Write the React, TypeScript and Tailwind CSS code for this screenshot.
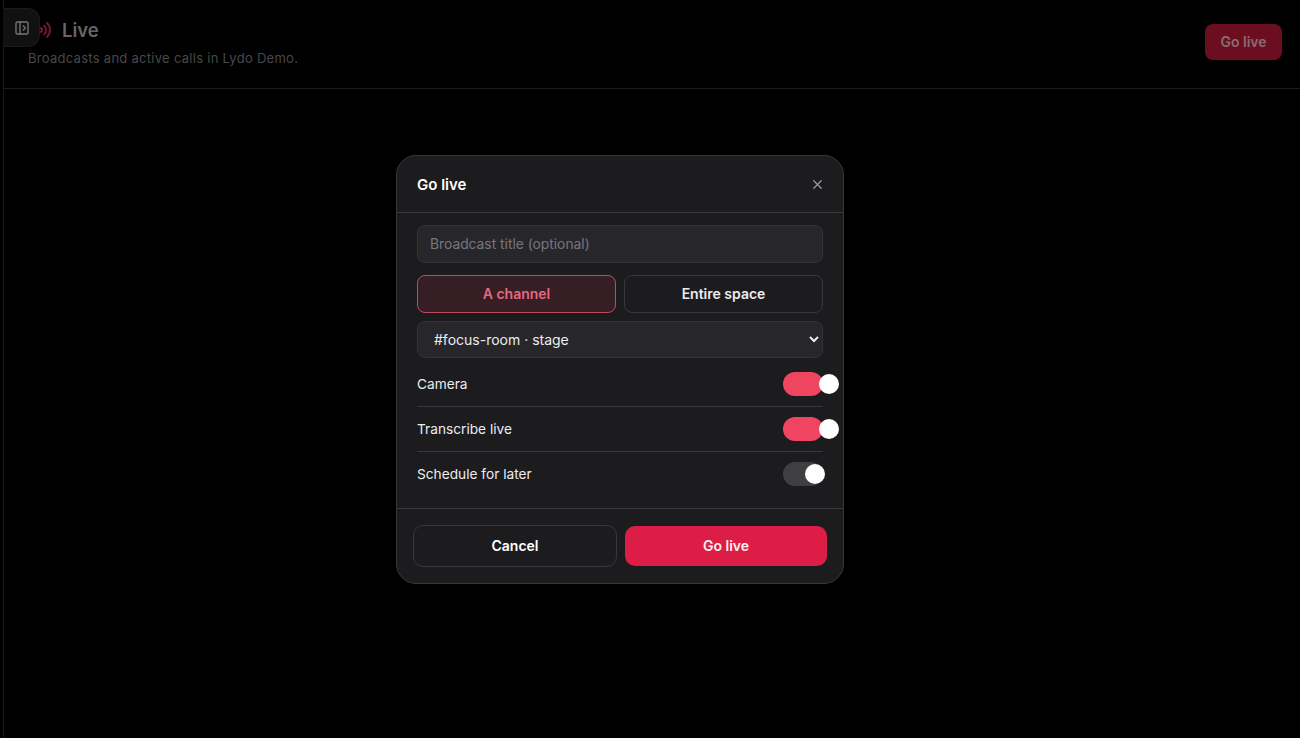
import { X, Radio, PanelLeftOpen } from "lucide-react";

function Toggle({ on }: { on: boolean }) {
  return (
    <div className={`relative h-6 w-10 shrink-0 rounded-full ${on ? "bg-[#ef4560]" : "bg-[#3f3f42]"}`}>
      <div className={`absolute top-0.5 size-5 rounded-full bg-white ${on ? "left-9" : "left-[22px]"}`} />
    </div>
  );
}

function OptionRow({ label, on, last }: { label: string; on: boolean; last?: boolean }) {
  return (
    <div className={`flex items-center justify-between ${last ? "h-11" : "h-[45px] border-b border-[#38383b]"}`}>
      <span className="text-[13.7px] text-[#ececee]">{label}</span>
      <Toggle on={on} />
    </div>
  );
}

export default function App() {
  return (
    <div className="relative flex h-screen w-full overflow-hidden bg-black font-['Inter',sans-serif]">
      <div className="w-1 shrink-0 border-r border-[#1a1a1b]" />
      <div className="min-w-0 flex-1">
        <header className="flex h-[89px] items-start justify-between border-b border-[#1c1c1d] pl-6 pr-[18px]">
          <div className="pt-[18px]">
            <div className="flex h-6 items-center gap-2.5">
              <Radio className="size-6 text-[#6e1a2d]" strokeWidth={2} />
              <h1 className="text-[18.5px] font-semibold leading-6 text-[#666668]">Live</h1>
            </div>
            <p className="mt-1.5 text-[13px] leading-5 tracking-[0.28px] text-[#48484a]">
              Broadcasts and active calls in Lydo Demo.
            </p>
          </div>
          <button className="mt-6 h-9 w-[77px] rounded-lg bg-[#6b0e20] pb-0.5 text-[14px] font-semibold text-[#8c6a72]">
            Go live
          </button>
        </header>
      </div>

      {/* sidebar toggle sits over the header */}
      <button className="absolute left-[3px] top-2 flex h-[39px] w-[37px] items-center justify-center rounded-r-xl border border-l-0 border-[#1b1b1c] bg-[#111112] pl-0.5">
        <PanelLeftOpen className="size-4 text-[#77777a]" />
      </button>

      {/* modal */}
      <div className="absolute left-[396px] top-[155px] flex h-[429px] w-[448px] flex-col rounded-[20px] border border-[#38383b] bg-[#1c1c1e]">
        <div className="flex h-[57px] shrink-0 items-center justify-between border-b border-[#38383b] pl-5 pr-[18px]">
          <h2 className="pt-0.5 text-[15px] font-semibold text-white">Go live</h2>
          <X className="size-[15px] text-[#9a9a9e]" />
        </div>

        <div className="flex flex-1 flex-col px-5 pt-3">
          <input
            placeholder="Broadcast title (optional)"
            className="h-[38px] w-full rounded-lg border border-[#323236] bg-[#27272b] px-3 pb-px text-[13.8px] text-white outline-none placeholder:text-[#77777b]"
          />
          <div className="mt-3 grid grid-cols-2 gap-2">
            <button className="h-[38px] rounded-lg border border-[#c04a62] bg-[#351e24] pb-0.5 text-[14px] font-semibold text-[#e8677f]">
              A channel
            </button>
            <button className="h-[38px] rounded-lg border border-[#38383b] bg-[#1c1c1e] pb-0.5 text-[14px] font-semibold text-[#ececee]">
              Entire space
            </button>
          </div>
          <select
            defaultValue="focus"
            className="mt-2 h-[37px] w-full rounded-lg border border-[#323236] bg-[#27272b] px-3 text-[14px] text-[#ececee] outline-none"
          >
            <option value="focus">#focus-room · stage</option>
          </select>
          <div className="mt-1">
            <OptionRow label="Camera" on />
            <OptionRow label="Transcribe live" on />
            <OptionRow label="Schedule for later" on={false} last />
          </div>
        </div>

        <div className="flex h-[75px] shrink-0 items-center gap-2 border-t border-[#38383b] px-4">
          <button className="h-[42px] w-[204px] rounded-[10px] border border-[#38383b] pb-0.5 text-[14px] font-semibold text-white">
            Cancel
          </button>
          <button className="h-10 w-[202px] rounded-[10px] bg-[#dc1e46] pb-0.5 text-[14px] font-semibold text-[#fdeef1]">
            Go live
          </button>
        </div>
      </div>
    </div>
  );
}
